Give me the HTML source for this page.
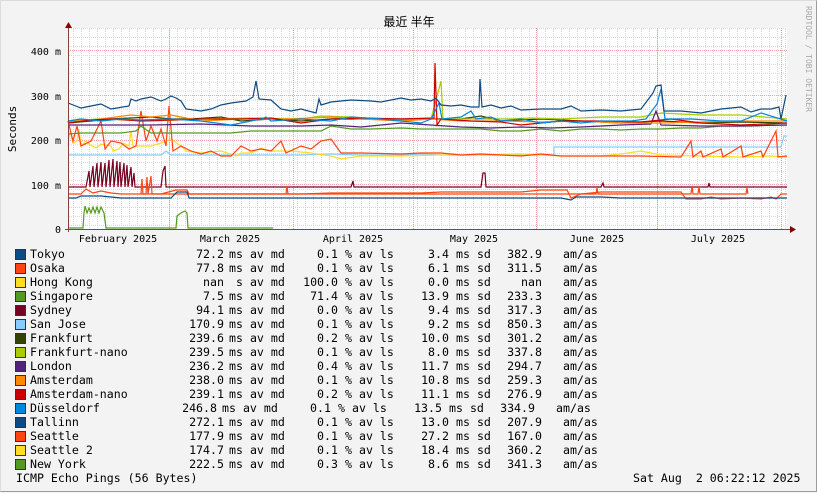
<!DOCTYPE html>
<html><head><meta charset="utf-8"><style>
body{margin:0;width:817px;height:492px;overflow:hidden;background:#f3f3f3;}
#w{position:relative;width:815px;height:490px;border-top:1px solid #dcdcdc;border-left:1px solid #dcdcdc;border-right:1px solid #9c9c9c;border-bottom:1px solid #9c9c9c;background:#f3f3f3;font-family:"DejaVu Sans Mono","Liberation Mono",monospace;}
.t{position:absolute;white-space:pre;font-size:11.6px;line-height:14px;color:#000;}
.r{text-align:right;}
.sq{position:absolute;left:14px;width:9px;height:9px;border:1px solid #333;}
svg{position:absolute;left:0;top:0;}
</style></head><body><div id="w">
<svg width="817" height="492" font-family="DejaVu Sans Mono, Liberation Mono, monospace">
<defs>
<pattern id="gv" x="0" y="0" width="8" height="500" patternUnits="userSpaceOnUse"><line x1="0.5" y1="0" x2="0.5" y2="500" stroke="#d6d6d6" stroke-dasharray="1,1"/></pattern>
<pattern id="gh" x="0" y="0.3" width="900" height="8.94" patternUnits="userSpaceOnUse"><line x1="0" y1="0.5" x2="900" y2="0.5" stroke="#d6d6d6" stroke-dasharray="1,1"/></pattern>
</defs>
<rect x="67" y="27" width="719" height="201" fill="#fff"/>
<rect x="67" y="27" width="719" height="201" fill="url(#gv)"/>
<rect x="67" y="27" width="719" height="201" fill="url(#gh)"/>
<g stroke="#f0a0a0" stroke-dasharray="1,1" stroke-width="1">
<line x1="168.5" y1="27" x2="168.5" y2="228"/><line x1="292.5" y1="27" x2="292.5" y2="228"/><line x1="412.5" y1="27" x2="412.5" y2="228"/><line x1="535.5" y1="27" x2="535.5" y2="228"/><line x1="656.5" y1="27" x2="656.5" y2="228"/><line x1="780.5" y1="27" x2="780.5" y2="228"/>
<line x1="67" y1="49.5" x2="786" y2="49.5"/><line x1="67" y1="94.5" x2="786" y2="94.5"/><line x1="67" y1="139.5" x2="786" y2="139.5"/><line x1="67" y1="183.5" x2="786" y2="183.5"/>
</g>
<g fill="none" stroke-width="1.2">
<polyline stroke="#559922" points="67,227 82,227 83,212 84,205 86,212 88,207 90,212 92,206 94,212 96,206 98,212 100,206 103,212 105,227 175,227 176,215 180,212 184,210 186,212 187,227 272,227"/>
<polyline stroke="#770022" points="67,186 85,186 88,170 89,186 92,165 93,186 96,162 97,186 100,161 101,186 104,162 105,186 108,159 109,186 112,158 113,186 116,160 117,186 119,161 120,186 123,162 124,186 126,164 127,186 130,166 131,186 133,172 134,186 160,186 162,170 164,165 165,186 180,186 350,186 352,180 353,186 480,186 482,172 484,172 485,186 600,186 602,182 603,186 707,186 708,182 709,186 786,186"/>
<polyline stroke="#ff4411" points="67,193 80,193 85,188 92,192 100,190 110,192 120,193 140,193 160,193 175,189 186,189 188,193 300,193 330,192 420,192 440,191 520,191 540,189 566,189 570,197 580,193 600,191 640,191 680,191 685,198 700,198 710,196 720,198 740,197 760,198 770,196 775,198 780,193 786,193"/>
<polyline stroke="#ff4411" points="140,193 141,178 142,193 145,193 146,176 147,193 150,175 151,193 285,193 286,185 287,193 595,193 596,187 597,193 690,193 691,185 692,193 697,193 698,186 699,193 745,193 746,187 747,193"/>
<polyline stroke="#0f4a82" points="67,197 75,197 80,195 90,195 100,195 110,196 120,197 150,197 170,197 176,191 186,191 188,197 300,197 400,197 520,197 560,197 570,199 575,196 600,196 620,197 786,197"/>
<polyline stroke="#88ccff" points="67,154 160,154 165,150 170,154 250,154 300,154 330,153 360,154 400,154 420,153 440,154 520,154 553,154 553,146 600,146 700,146 780,146 783,135 786,135"/>
<polyline stroke="#ffdd22" points="67,145 69,130 72,142 76,140 78,128 80,145 85,140 88,143 95,147 100,143 110,145 112,150 118,148 122,142 128,145 130,130 132,145 140,145 150,145 160,142 170,138 180,145 185,150 200,152 220,150 235,155 240,152 250,152 260,147 270,150 290,150 310,152 330,155 340,158 360,155 400,155 440,154 480,154 520,153 560,155 600,155 620,153 640,150 660,154 700,155 740,156 770,155 786,156"/>
<polyline stroke="#ff4411" points="67,120 72,140 76,125 80,145 90,140 100,120 104,148 110,140 120,142 128,148 135,145 140,110 145,140 150,125 156,140 160,128 165,145 168,105 172,150 180,145 190,150 200,153 210,150 220,155 230,155 240,145 250,150 260,148 270,150 280,140 285,152 300,145 310,148 320,140 330,138 340,152 360,152 400,153 420,152 440,152 460,154 480,153 500,154 520,155 540,153 560,155 600,155 640,155 680,156 690,140 692,156 700,150 702,156 720,148 722,156 740,145 742,156 760,150 762,156 775,130 777,156 786,155"/>
<polyline stroke="#559922" points="67,133 80,132 100,132 120,132 135,130 140,125 150,132 200,132 230,132 250,130 300,130 320,130 330,125 350,128 370,128 400,127 420,128 440,128 460,128 480,128 500,130 520,130 540,128 560,130 580,128 600,128 620,129 640,128 660,128 680,127 700,127 720,125 750,125 770,124 786,124"/>
<polyline stroke="#334400" points="67,122 90,120 110,118 130,117 150,116 170,118 190,118 220,116 240,120 270,118 300,120 330,118 360,118 400,118 430,118 460,118 480,115 500,120 540,118 580,120 620,122 660,120 700,122 740,121 786,122"/>
<polyline stroke="#aacc00" points="67,120 100,118 150,120 200,118 250,117 300,118 320,115 350,116 400,119 430,118 440,80 442,118 470,118 510,118 530,117 560,118 600,116 640,116 660,112 700,114 740,114 786,118"/>
<polyline stroke="#552277" points="67,124 100,124 150,124 200,123 250,125 300,125 330,124 360,126 400,122 430,124 460,126 490,127 520,126 550,127 580,126 620,124 650,123 655,110 660,124 700,125 740,125 786,124"/>
<polyline stroke="#ff8800" points="67,121 100,118 130,114 150,116 170,114 200,120 240,118 290,118 330,116 360,118 400,120 430,118 460,120 500,120 540,121 580,120 620,122 660,122 700,121 740,120 786,120"/>
<polyline stroke="#cc0000" points="67,122 90,119 110,118 140,120 170,119 200,118 240,118 270,117 300,122 330,118 360,117 400,118 433,117 434,62 436,124 440,118 470,120 500,121 520,124 560,120 600,120 640,121 670,118 700,122 740,124 786,122"/>
<polyline stroke="#0088dd" points="67,120 80,118 100,120 120,118 140,119 170,118 200,120 230,124 250,120 260,118 265,116 270,120 300,118 330,120 350,116 380,118 400,120 420,122 430,118 438,102 441,118 460,116 470,110 475,118 490,116 500,120 520,118 540,122 560,120 580,122 600,120 630,120 645,118 656,103 660,88 664,118 690,118 720,120 740,120 760,112 786,120"/>
<polyline stroke="#0f4a82" points="67,102 80,107 90,105 100,103 110,108 128,105 130,98 135,100 140,98 150,96 160,100 165,98 170,95 175,97 180,100 185,108 200,110 210,108 220,104 230,102 245,100 252,96 255,80 258,98 270,99 280,108 290,110 300,108 315,112 318,98 320,104 330,101 350,99 370,100 380,101 400,97 410,99 420,98 430,100 435,97 440,104 450,105 460,104 470,106 478,106 479,78 481,106 490,104 500,107 510,105 520,109 540,108 560,108 570,105 580,110 600,109 620,110 640,108 652,92 655,85 660,84 663,110 680,110 700,112 720,108 740,106 750,111 760,108 770,108 778,106 780,118 785,94"/>
</g>
<g stroke="#800" fill="#800">
<line x1="64" y1="228.5" x2="790" y2="228.5" stroke="#8a4040"/>
<line x1="67.5" y1="231" x2="67.5" y2="26" stroke="#8a4040"/>
<polygon points="64,27 71,27 67.5,21" stroke="none"/>
<polygon points="789,225 789,232 795,228.5" stroke="none"/>
</g>
<g font-size="10" fill="#000" text-anchor="end">
<text x="60" y="54">400 m</text><text x="60" y="99">300 m</text><text x="60" y="143">200 m</text><text x="60" y="188">100 m</text><text x="60" y="232">0</text>
</g>
<g font-size="10" fill="#000" text-anchor="middle">
<text x="117" y="241">February 2025</text><text x="229" y="241">March 2025</text><text x="352" y="241">April 2025</text><text x="473" y="241">May 2025</text><text x="596" y="241">June 2025</text><text x="717" y="241">July 2025</text>
</g>
<text x="408" y="25" font-size="12" text-anchor="middle" font-family="Liberation Sans, Noto Sans CJK SC, sans-serif">最近 半年</text>
<text transform="translate(15,128) rotate(-90)" font-size="11" text-anchor="middle">Seconds</text>
<text transform="translate(805,5) rotate(90)" font-size="8" fill="#aaa">RRDTOOL / TOBI OETIKER</text>
</svg>

<div class="sq" style="top:248px;background:#0f4a82"></div>
<div class="sq" style="top:262px;background:#ff4411"></div>
<div class="sq" style="top:276px;background:#ffdd22"></div>
<div class="sq" style="top:290px;background:#559922"></div>
<div class="sq" style="top:304px;background:#770022"></div>
<div class="sq" style="top:318px;background:#88ccff"></div>
<div class="sq" style="top:332px;background:#334400"></div>
<div class="sq" style="top:346px;background:#aacc00"></div>
<div class="sq" style="top:360px;background:#552277"></div>
<div class="sq" style="top:374px;background:#ff8800"></div>
<div class="sq" style="top:388px;background:#cc0000"></div>
<div class="sq" style="top:402px;background:#0088dd"></div>
<div class="sq" style="top:416px;background:#0f4a82"></div>
<div class="sq" style="top:430px;background:#ff4411"></div>
<div class="sq" style="top:444px;background:#ffdd22"></div>
<div class="sq" style="top:458px;background:#559922"></div>

<div class="t" style="left:29px;top:246px">Tokyo
Osaka
Hong Kong
Singapore
Sydney
San Jose
Frankfurt
Frankfurt-nano
London
Amsterdam
Amsterdam-nano
Düsseldorf
Tallinn
Seattle
Seattle 2
New York</div>
<div class="t r" style="left:143px;width:80px;top:246px">72.2
77.8
nan
7.5
94.1
170.9
239.6
239.5
236.2
238.0
239.1

272.1
177.9
174.7
222.5</div>
<div class="t" style="left:228px;top:246px">ms av md
ms av md
 s av md
ms av md
ms av md
ms av md
ms av md
ms av md
ms av md
ms av md
ms av md

ms av md
ms av md
ms av md
ms av md</div>
<div class="t r" style="left:287px;width:50px;top:246px">0.1
0.1
100.0
71.4
0.0
0.1
0.2
0.1
0.4
0.1
0.2

0.1
0.1
0.1
0.3</div>
<div class="t" style="left:344px;top:246px">% av ls
% av ls
% av ls
% av ls
% av ls
% av ls
% av ls
% av ls
% av ls
% av ls
% av ls

% av ls
% av ls
% av ls
% av ls</div>
<div class="t r" style="left:398px;width:50px;top:246px">3.4
6.1
0.0
13.9
9.4
9.2
10.0
8.0
11.7
10.8
11.1

13.0
27.2
18.4
8.6</div>
<div class="t" style="left:455px;top:246px">ms sd
ms sd
ms sd
ms sd
ms sd
ms sd
ms sd
ms sd
ms sd
ms sd
ms sd

ms sd
ms sd
ms sd
ms sd</div>
<div class="t r" style="left:491px;width:50px;top:246px">382.9
311.5
nan
233.3
317.3
850.3
301.2
337.8
294.7
259.3
276.9

207.9
167.0
360.2
341.3</div>
<div class="t" style="left:562px;top:246px">am/as
am/as
am/as
am/as
am/as
am/as
am/as
am/as
am/as
am/as
am/as

am/as
am/as
am/as
am/as</div>
<div class="t r" style="left:136px;width:80px;top:400px">246.8</div>
<div class="t" style="left:221px;top:400px">ms av md</div>
<div class="t r" style="left:280px;width:50px;top:400px">0.1</div>
<div class="t" style="left:337px;top:400px">% av ls</div>
<div class="t r" style="left:391px;width:50px;top:400px">13.5</div>
<div class="t" style="left:448px;top:400px">ms sd</div>
<div class="t r" style="left:484px;width:50px;top:400px">334.9</div>
<div class="t" style="left:555px;top:400px">am/as</div>
<div class="t" style="left:15px;top:470px">ICMP Echo Pings (56 Bytes)</div>
<div class="t" style="left:632px;top:470px">Sat Aug  2 06:22:12 2025</div>
</div></body></html>
